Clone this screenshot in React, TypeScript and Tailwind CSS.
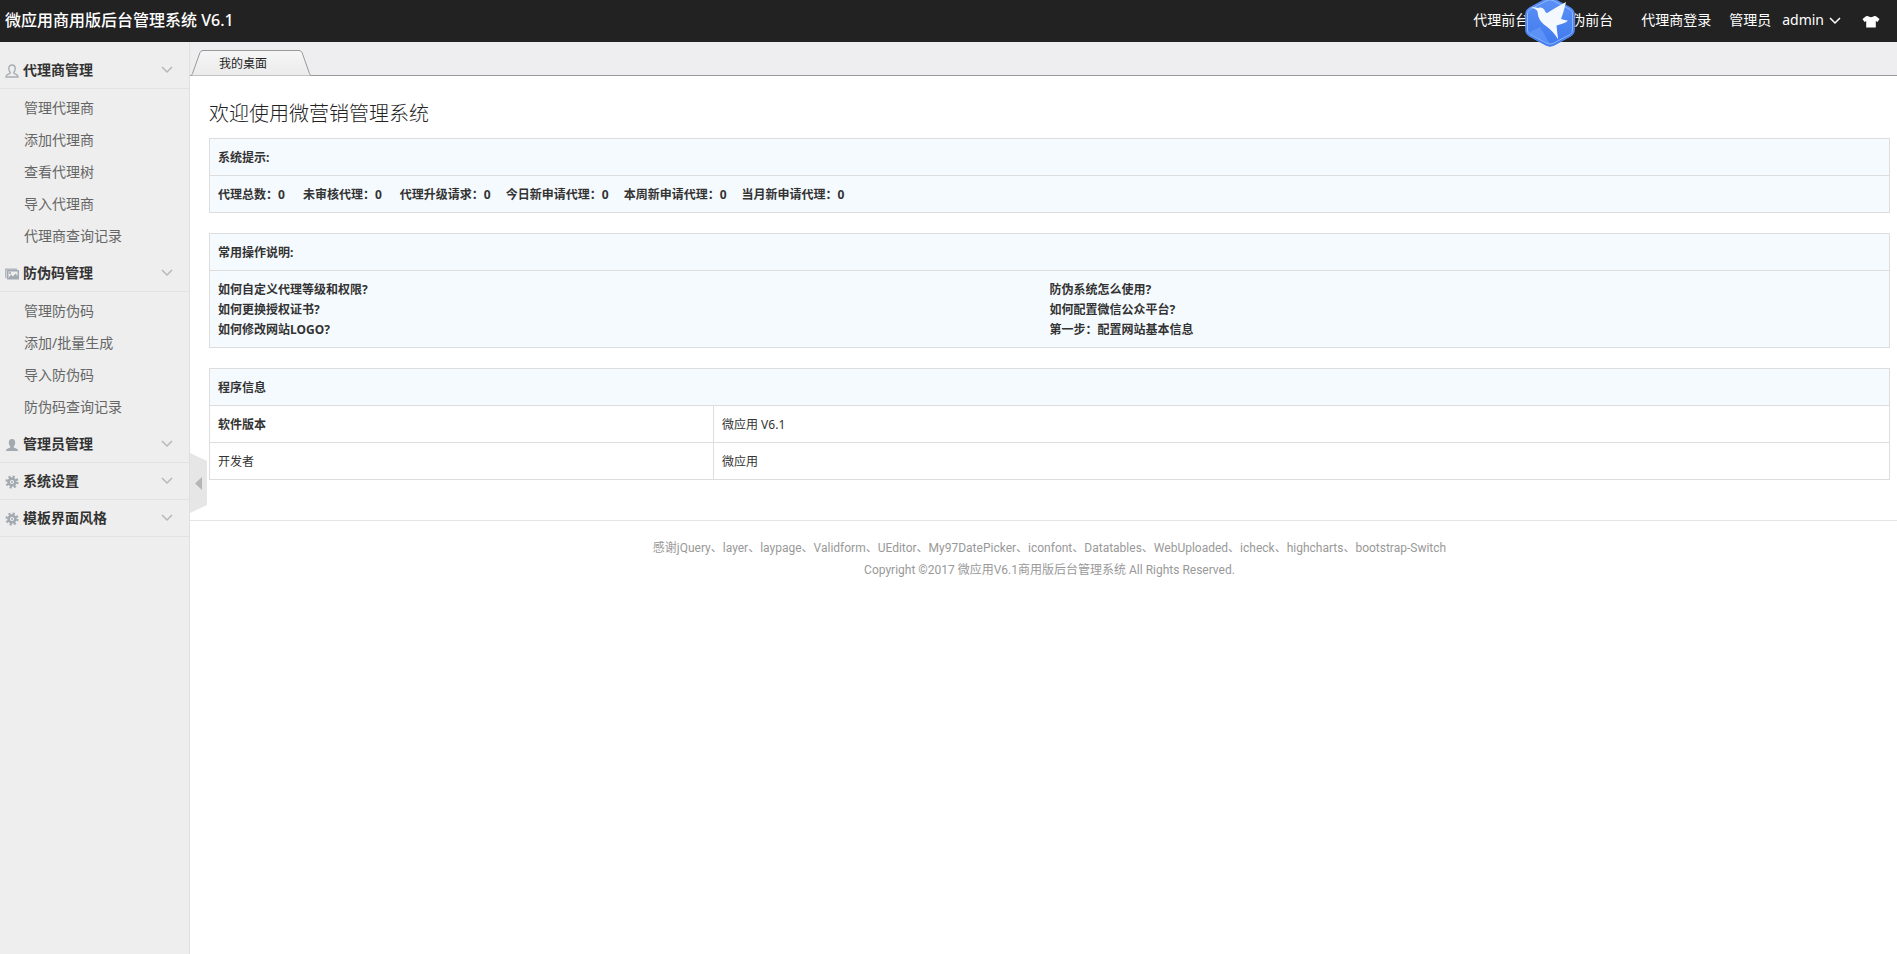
import { useState } from "react";

type Icon = "user" | "image" | "admin" | "gear";

const topLinks = ["代理前台", "防伪前台", "代理商登录"];

const menus: { title: string; icon: Icon; items: string[] }[] = [
  {
    title: "代理商管理",
    icon: "user",
    items: ["管理代理商", "添加代理商", "查看代理树", "导入代理商", "代理商查询记录"],
  },
  {
    title: "防伪码管理",
    icon: "image",
    items: ["管理防伪码", "添加/批量生成", "导入防伪码", "防伪码查询记录"],
  },
  { title: "管理员管理", icon: "admin", items: [] },
  { title: "系统设置", icon: "gear", items: [] },
  { title: "模板界面风格", icon: "gear", items: [] },
];

const stats = [
  { label: "代理总数", value: 0, space: "mr-[18px]" },
  { label: "未审核代理", value: 0, space: "mr-[18px]" },
  { label: "代理升级请求", value: 0, space: "mr-[15px]" },
  { label: "今日新申请代理", value: 0, space: "mr-[15px]" },
  { label: "本周新申请代理", value: 0, space: "mr-[15px]" },
  { label: "当月新申请代理", value: 0, space: "" },
];

const helpLinks = [
  ["如何自定义代理等级和权限?", "如何更换授权证书?", "如何修改网站LOGO?"],
  ["防伪系统怎么使用?", "如何配置微信公众平台?", "第一步：配置网站基本信息"],
];

const personPath =
  "M7 1C4.8 1 3.8 2.5 3.8 4.5c0 1.700.6 3 1.500 3.900C5.300 9.500 4.600 9.800 3.400 10.200 1.700 10.800 1 11.500 1 13h12c0-1.500-.7-2.200-2.400-2.800-1.200-.4-1.900-.7-1.900-1.800.9-.9 1.500-2.200 1.500-3.900C10.200 2.500 9.200 1 7 1Z";

function MenuIcon({ name }: { name: Icon }) {
  if (name === "user") {
    return (
      <svg viewBox="0 0 14 14" className="mt-[2px] size-[14px]" fill="none" stroke="#a9adb3" strokeWidth="1.4">
        <path d={personPath} />
      </svg>
    );
  }
  if (name === "image") {
    return (
      <svg viewBox="0 0 14 14" className="mt-[2px] size-[14px]" fill="#a3a9b1">
        <path d="M0 1.500h12V3H1.500v8H0Z" opacity=".8" />
        <path fillRule="evenodd" d="M2 3h12v9.500H2Zm1.500 1.500V11h9V4.500Z" />
        <path d="m3 11.500 3-4 2 2 2.500-3 3 3.500v1.500Z" />
        <circle cx="5" cy="6" r="1.100" />
      </svg>
    );
  }
  if (name === "admin") {
    return (
      <svg viewBox="0 0 14 14" className="mt-[2px] size-[14px]" fill="#a3a9b1">
        <path d={personPath} />
      </svg>
    );
  }
  return (
    <svg viewBox="0 0 14 14" className="mt-[2px] size-[14px]" fill="none" stroke="#a3a9b1">
      <circle cx="7" cy="7" r="3.400" strokeWidth="2.600" />
      <circle cx="7" cy="7" r="5.400" strokeWidth="2.400" strokeDasharray="2.120 2.120" />
      <circle cx="7" cy="7" r="1" fill="#a3a9b1" stroke="none" />
    </svg>
  );
}

function Chevron({ className }: { className: string }) {
  return (
    <svg viewBox="0 0 12 8" className={className} fill="none" stroke="currentColor">
      <path d="m1 1 5 5 5-5" />
    </svg>
  );
}

function BirdBadge() {
  return (
    <svg viewBox="0 0 50 50" className="absolute -top-[3px] right-[322px] size-[50px]">
      <defs>
        <linearGradient id="badge" x1="0" y1="0" x2="0" y2="1">
          <stop offset="0" stopColor="#5c92f6" />
          <stop offset="1" stopColor="#3f78ee" />
        </linearGradient>
      </defs>
      <path
        d="M21.500 1.500q3.500-1.600 7 0L46 11q3.300 2 3.300 5.500v17q0 3.500-3.300 5.500l-17.500 9.500q-3.500 1.600-7 0L4 39Q.7 37 .7 33.500v-17Q.7 13 4 11Z"
        fill="url(#badge)"
        stroke="#4f86f2"
      />
      <path
        d="M22 3.500q3-1.300 6 0L45 12.500q2.500 1.500 2.500 4.500v16q0 3-2.500 4.500l-17 9q-3 1.300-6 0l-17-9Q2.500 36 2.500 33V17q0-3 2.500-4.500Z"
        fill="none"
        stroke="#8db8fb"
      />
      <path d="m3 36 12-6 10 17-4-1Z" fill="#6b9ff8" opacity=".6" />
      <path
        d="M6 10.500c3-.7 5-.2 7 .4 3-1.200 6 .3 7 3.200.6 2 1.600 2.400 3 1.500C29 11.500 34 9 41 5c-1.500 6-3 12-5 17l7 1.800c-2.500 2-7 3.700-11.500 4.700.5 5 1 9 1.700 14-3-5-7-10-12.200-13.500C15 25 13 20 12.700 15.500c-.2-2.500-3-4-6.700-5Z"
        fill="#f4f8ff"
      />
    </svg>
  );
}

function Header() {
  return (
    <header className="relative z-10 flex h-[42px] items-center justify-between bg-[#222] pl-[5px] pr-[17px] text-white">
      <h1 className="pb-[2px] text-base font-medium">微应用商用版后台管理系统 V6.1</h1>
      <nav className="flex items-center text-sm">
        {topLinks.map((label, i) => (
          <a key={label} href="#" className={`pb-[2px] ${i < 2 ? "mr-7" : "mr-[18px]"}`}>
            {label}
          </a>
        ))}
        <span className="mr-[11px] pb-[2px]">管理员</span>
        <button type="button" className="mr-[21px] flex items-center gap-[5px]">
          <span className="pb-[2px]">admin</span>
          <Chevron className="h-[8px] w-[12px] stroke-[1.5]" />
        </button>
        <button type="button" aria-label="换肤">
          <svg viewBox="0 0 18 14" className="mt-[2px] h-[14px] w-[18px]" fill="#fff">
            <path d="M6 1c1 1.500 5 1.500 6 0l2 .3L17.500 4l-2 3-1.700-1V12.500H4.200V6l-1.700 1-2-3L4 1.300Z" />
          </svg>
        </button>
      </nav>
      <BirdBadge />
    </header>
  );
}

function Sidebar() {
  return (
    <aside className="w-[190px] shrink-0 border-r border-[#e0e0e0] bg-[#eee] pt-[10px]">
      {menus.map((menu) => (
        <section key={menu.title}>
          <button
            type="button"
            className="flex h-[37px] w-full items-center border-b border-[#e2e2e2] pl-[5px] pr-[16px] text-left text-sm font-bold text-[#333]"
          >
            <MenuIcon name={menu.icon} />
            <span className="ml-[4px] flex-1">{menu.title}</span>
            <Chevron className="h-[8px] w-[12px] stroke-[1.5] text-[#b8b8b8]" />
          </button>
          {menu.items.length > 0 && (
            <ul className="py-[3px]">
              {menu.items.map((item) => (
                <li key={item}>
                  <a href="#" className="block pl-6 text-sm leading-8 text-[#666]">
                    {item}
                  </a>
                </li>
              ))}
            </ul>
          )}
        </section>
      ))}
    </aside>
  );
}

function TabBar() {
  return (
    <div className="flex h-[34px] items-end border-b border-[#999] bg-[#eeeef0]">
      <button type="button" className="relative -mb-px h-[26px] w-[121px] pl-[29px] pt-[2px] text-left text-xs text-[#222]">
        <svg viewBox="0 0 121 26" className="absolute inset-0 size-full" fill="none">
          <defs>
            <linearGradient id="tab" x1="0" y1="0" x2="0" y2="1">
              <stop offset="0" stopColor="#f6f6f6" />
              <stop offset="1" stopColor="#ebebeb" />
            </linearGradient>
          </defs>
          <path
            d="M0 25.500c1.500 0 2-.8 2.500-2L10 2.500Q11 .5 13 .5h96q2 0 3 2l7.500 21c.5 1.200 1 2 2 2"
            fill="url(#tab)"
            stroke="#999"
          />
        </svg>
        <span className="relative">我的桌面</span>
      </button>
    </div>
  );
}

const tableClass = "mb-5 w-full border-collapse text-left text-xs leading-5 text-[#333]";
const cellClass = "border border-[#ddd] px-2 pb-[7px] pt-[9px]";

function Dashboard() {
  return (
    <div className="pb-5 pl-[19px] pr-[7px] pt-[22px]">
      <h2 className="mb-[8px] text-xl font-light leading-8 text-[#222]">欢迎使用微营销管理系统</h2>

      <table className={`${tableClass} bg-[#f5fafe] font-bold`}>
        <thead>
          <tr>
            <th className={cellClass}>系统提示:</th>
          </tr>
        </thead>
        <tbody>
          <tr>
            <td className={cellClass}>
              {stats.map((stat) => (
                <span key={stat.label} className={stat.space}>
                  {stat.label}：{stat.value}
                </span>
              ))}
            </td>
          </tr>
        </tbody>
      </table>

      <table className={`${tableClass} bg-[#f5fafe] font-bold`}>
        <thead>
          <tr>
            <th className={cellClass}>常用操作说明:</th>
          </tr>
        </thead>
        <tbody>
          <tr>
            <td className={cellClass}>
              <div className="grid grid-cols-2">
                {helpLinks.map((column) => (
                  <ul key={column[0]}>
                    {column.map((label) => (
                      <li key={label}>
                        <a href="#">{label}</a>
                      </li>
                    ))}
                  </ul>
                ))}
              </div>
            </td>
          </tr>
        </tbody>
      </table>

      <table className={tableClass}>
        <thead>
          <tr className="bg-[#f5fafe]">
            <th colSpan={2} className={cellClass}>
              程序信息
            </th>
          </tr>
        </thead>
        <tbody>
          <tr>
            <th className={`${cellClass} w-[30%]`}>软件版本</th>
            <td className={cellClass}>微应用 V6.1</td>
          </tr>
          <tr>
            <td className={cellClass}>开发者</td>
            <td className={cellClass}>微应用</td>
          </tr>
        </tbody>
      </table>
    </div>
  );
}

function Footer() {
  return (
    <footer className="border-t border-[#e5e5e5] pl-[19px] pr-[7px] pt-4 text-center font-['Roboto','Noto_Sans_CJK_SC',sans-serif] text-xs leading-[22px] text-[#999]">
      <p>
        感谢jQuery、layer、laypage、Validform、UEditor、My97DatePicker、iconfont、Datatables、WebUploaded、icheck、highcharts、bootstrap-Switch
      </p>
      <p>Copyright ©2017 微应用V6.1商用版后台管理系统 All Rights Reserved.</p>
    </footer>
  );
}

export default function App() {
  const [open, setOpen] = useState(true);

  return (
    <div className="flex min-h-screen flex-col bg-white font-['Noto_Sans','Noto_Sans_CJK_SC',sans-serif]">
      <Header />
      <div className="flex flex-1">
        {open && <Sidebar />}
        <main className="relative min-w-0 flex-1">
          <TabBar />
          <Dashboard />
          <Footer />
          <button
            type="button"
            aria-label="收起菜单"
            onClick={() => setOpen(!open)}
            className="absolute left-0 top-[411px] h-[60px] w-[17px]"
          >
            <svg viewBox="0 0 17 60" className="size-full">
              <path d="M0 0 17 8v44L0 60Z" fill="#e6e6e6" />
              <path d="M12 24v13L5 30.500Z" fill="#b5b5b5" />
            </svg>
          </button>
        </main>
      </div>
    </div>
  );
}
